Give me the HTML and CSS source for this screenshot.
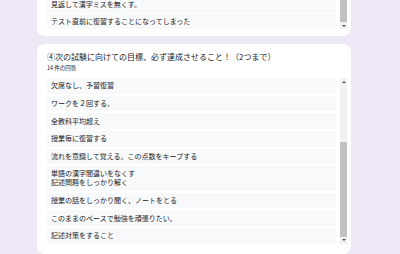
FILE: index.html
```html
<!DOCTYPE html>
<html lang="ja">

<head>
    <meta charset="UTF-8">
    <meta name="viewport" content="width=device-width, initial-scale=1.0">
    <title>回答</title>
    <link rel="stylesheet" href="styles.css">
</head>

<body>

    <div class="page">
        <div class="card card-top">
            <div class="answers">
                <ul class="answer-list">
                    <li>見返して漢字ミスを無くす。</li>
                    <li>テスト直前に復習することになってしまった</li>
                </ul>
                <div class="scrollbar">
                    <div class="thumb"></div>
                    <div class="arrow arrow-down"></div>
                </div>
            </div>
        </div>

        <div class="card">
            <div class="question">④次の試験に向けての目標、必ず達成させること！（2つまで）</div>
            <div class="count">14 件の回答</div>
            <div class="answers">
                <ul class="answer-list">
                    <li>欠席なし、予習復習</li>
                    <li>ワークを２回する。</li>
                    <li>全教科平均超え</li>
                    <li>授業毎に復習する</li>
                    <li>流れを意識して覚える。この点数をキープする</li>
                    <li>単語の漢字間違いをなくす<br>記述問題をしっかり解く</li>
                    <li>授業の話をしっかり聞く、ノートをとる</li>
                    <li>このままのペースで勉強を頑張りたい。</li>
                    <li>記述対策をすること</li>
                </ul>
                <div class="scrollbar">
                    <div class="arrow arrow-up"></div>
                    <div class="track"></div>
                    <div class="thumb thumb-low"></div>
                    <div class="arrow arrow-down"></div>
                </div>
            </div>
        </div>
    </div>

</body>

</html>
```

FILE: styles.css
```css
body {
    margin: 0;
    background-color: #ede7f6;
    font-family: "Noto Sans CJK JP", "Noto Sans", sans-serif;
    color: #202124;
    overflow: hidden;
}

.page {
    width: 314px;
    margin-left: 37px;
    display: flex;
    flex-direction: column;
    gap: 8px;
}

.card {
    background-color: #fff;
    border-radius: 8px;
    padding: 7px 4px 10px 10px;
}

.card-top {
    margin-top: -3px;
    padding-top: 0;
    padding-bottom: 7px;
    border-radius: 0 0 8px 8px;
}

.card-top .answer-list {
    gap: 1px;
}

.question {
    font-size: 8px;
    line-height: 11px;
}

.count {
    font-size: 5.5px;
    line-height: 8px;
    margin-top: 2px;
    margin-bottom: 6px;
}

.answers {
    display: flex;
    gap: 4px;
}

.answer-list {
    list-style: none;
    margin: 0;
    padding: 0;
    flex: 1;
    display: flex;
    flex-direction: column;
    gap: 2px;
}

.answer-list li {
    background-color: #f8f9fa;
    font-size: 7px;
    line-height: 9px;
    padding: 3.3px 4px;
}

.scrollbar {
    width: 7px;
    display: flex;
    flex-direction: column;
    background-color: #f1f1f1;
}

.thumb {
    flex: 1;
    background-color: #c1c1c1;
}

.track {
    height: 57px;
}

.thumb-low {
    flex: 1;
}

.arrow {
    height: 7px;
    display: flex;
    align-items: center;
    justify-content: center;
}

.arrow::before {
    content: "";
    border-left: 2px solid transparent;
    border-right: 2px solid transparent;
}

.arrow-up::before {
    border-bottom: 2px solid #505050;
}

.arrow-down::before {
    border-top: 2px solid #505050;
}
```
